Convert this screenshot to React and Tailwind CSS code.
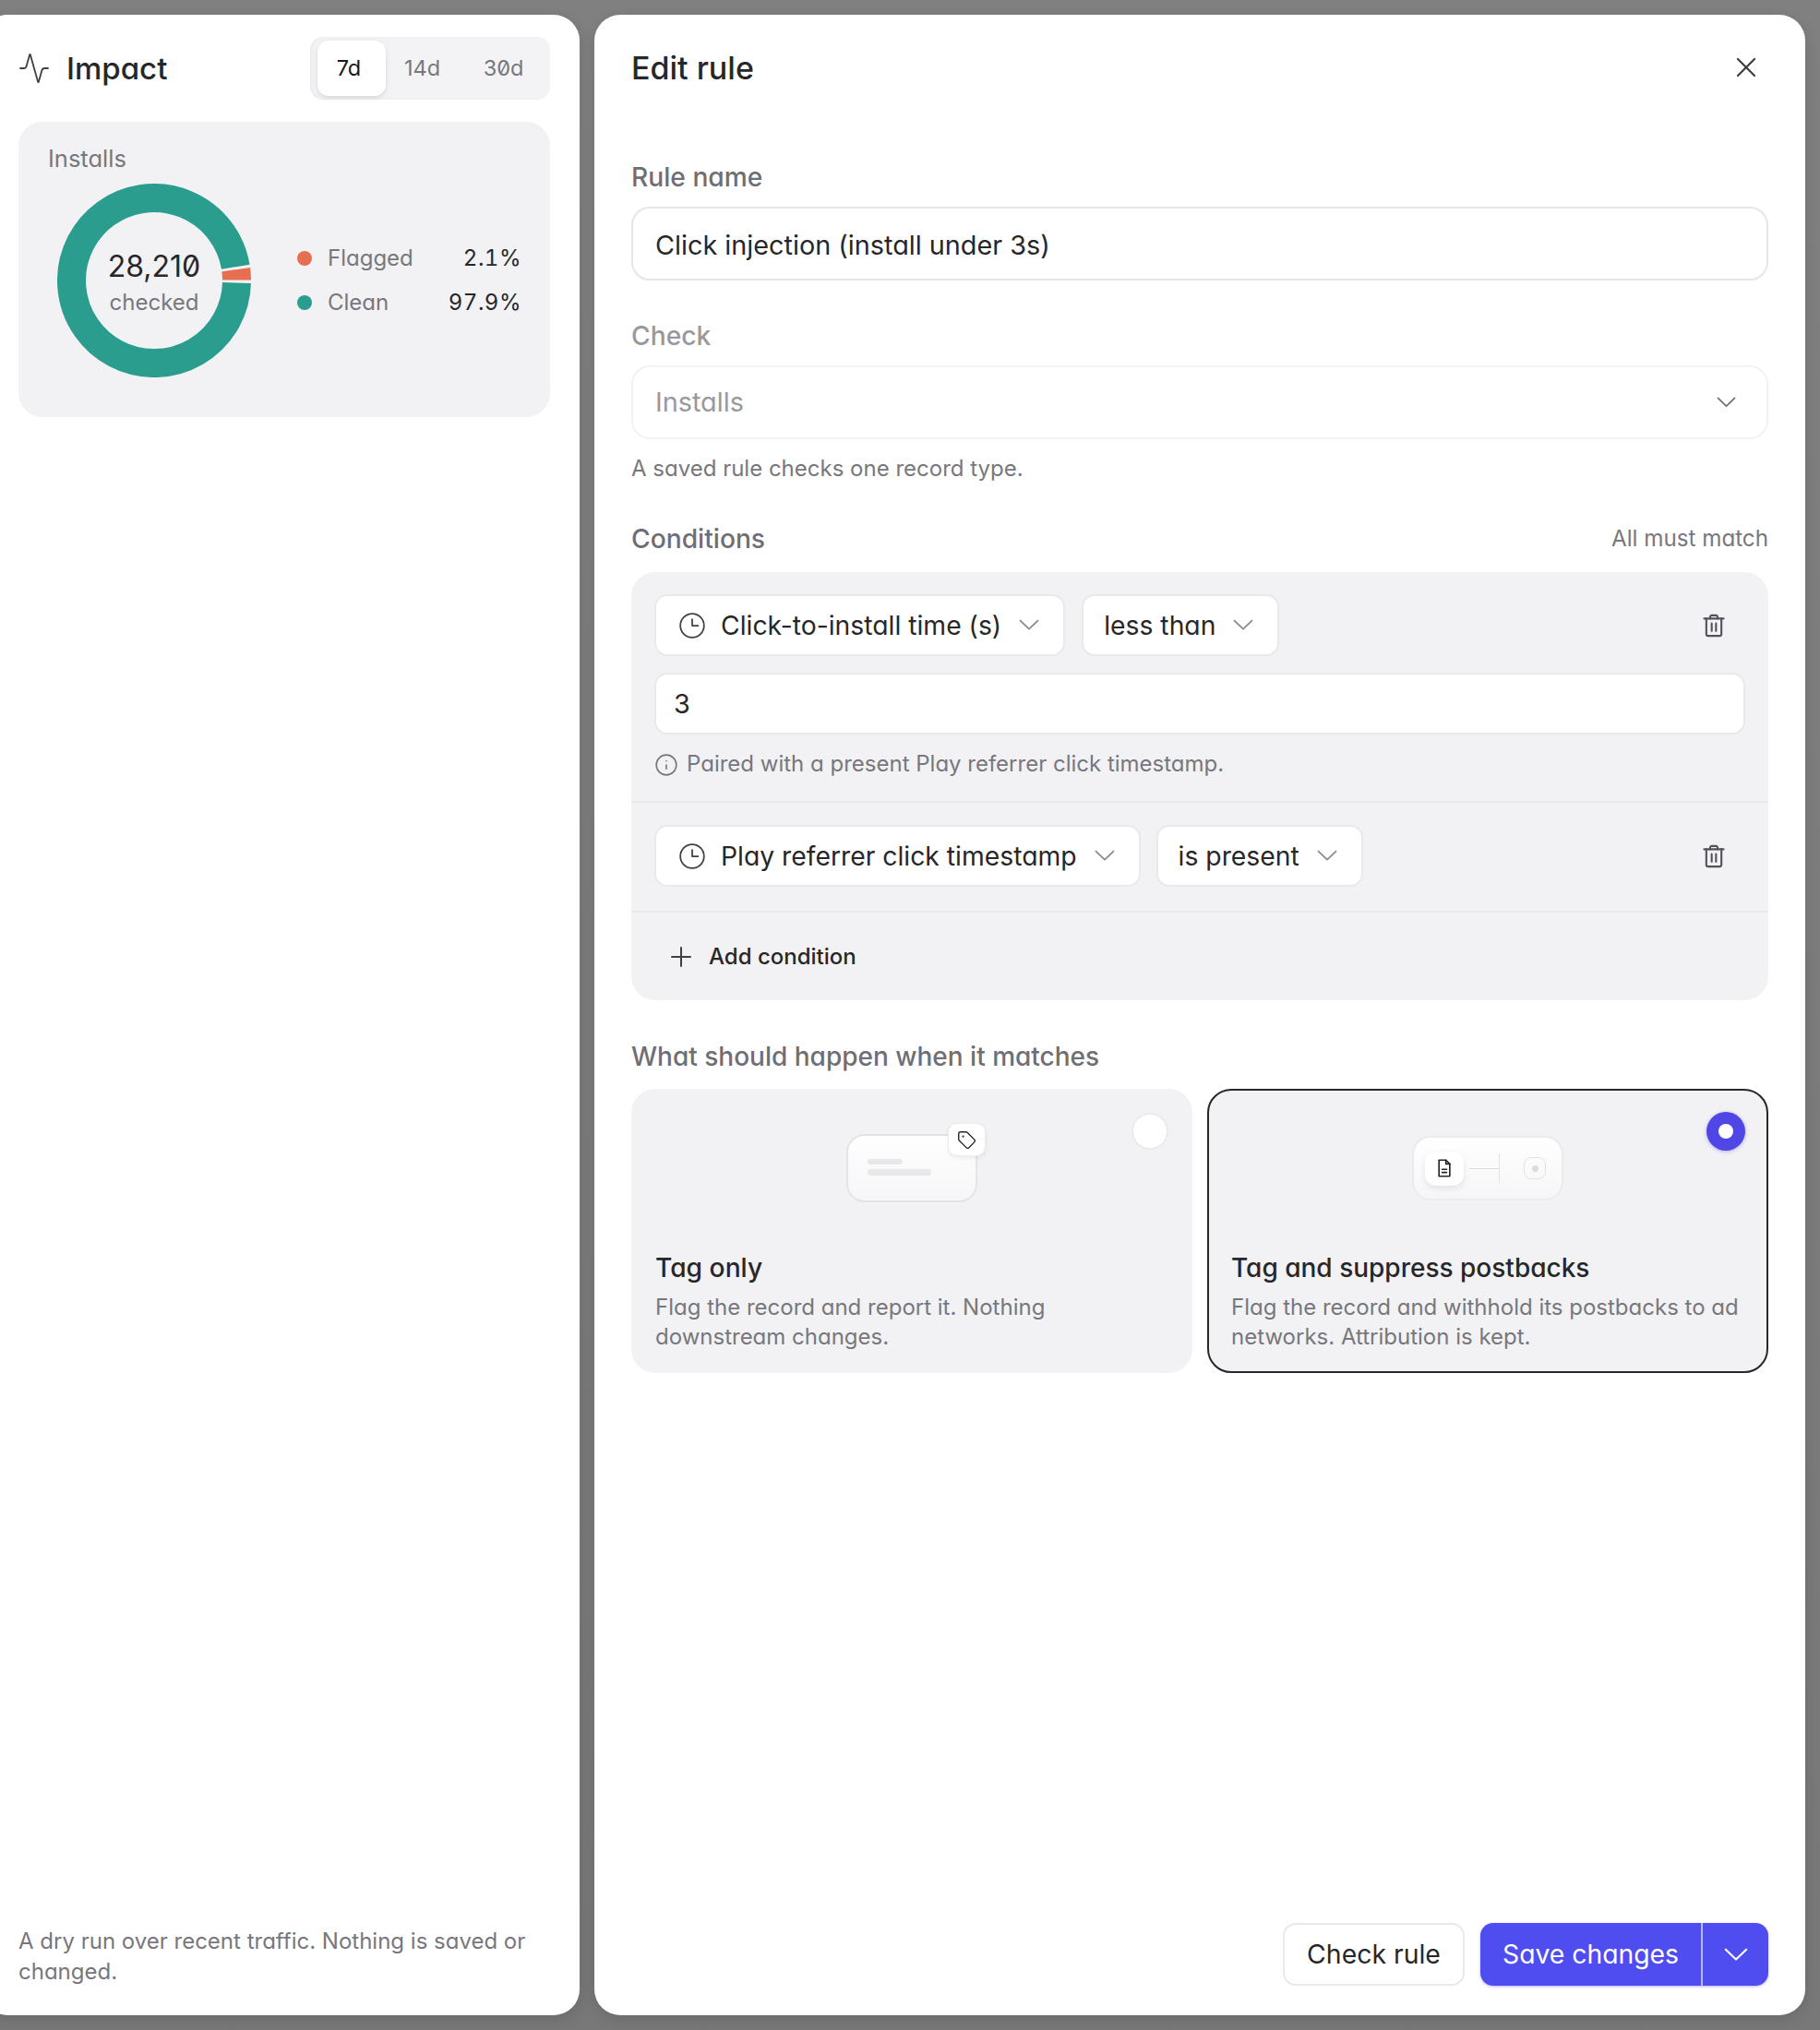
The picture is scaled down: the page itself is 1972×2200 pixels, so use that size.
import React from 'react';
import { Activity, X, Info, Tag } from 'lucide-react';

const polar = (a, r = 89.5) => {
  const t = (a * Math.PI) / 180;
  return `${(105 + r * Math.cos(t)).toFixed(2)} ${(105 + r * Math.sin(t)).toFixed(2)}`;
};
const arc = (from, to) => `M${polar(from)}A89.5 89.5 0 ${to - from > 180 ? 1 : 0} 1 ${polar(to)}`;

function Chevron({ w = 22, color = '#8a8a90' }) {
  return (
    <svg width={w} height={w * 0.55} viewBox="0 0 22 12" fill="none" stroke={color} strokeWidth="1.8" strokeLinecap="round" strokeLinejoin="round" className="shrink-0">
      <path d="M1.500 1.500 11 10.500l9.500-9" />
    </svg>
  );
}

function ClockIcon() {
  return (
    <svg width="28" height="28" viewBox="0 0 24 24" fill="none" stroke="#3f3f46" strokeWidth="1.5" strokeLinecap="round" strokeLinejoin="round" className="shrink-0">
      <circle cx="12" cy="12" r="11" />
      <path d="M12 6v6h5.500" />
    </svg>
  );
}

function TrashIcon() {
  return (
    <svg width="28" height="28" viewBox="0 0 24 24" fill="none" stroke="#52525b" strokeWidth="1.8" strokeLinecap="round" strokeLinejoin="round">
      <path d="M3 5.500h18" />
      <path d="M8.500 5.500V4a1.500 1.500 0 0 1 1.500-1.500h4A1.500 1.500 0 0 1 15.500 4v1.500" />
      <path d="M5 5.500V20a1.500 1.500 0 0 0 1.500 1.500h11A1.500 1.500 0 0 0 19 20V5.500" />
      <path d="M10 10v7M14 10v7" />
    </svg>
  );
}

function Pick({ children, clock }) {
  return (
    <div className={clock ? 'flex h-[67px] items-center rounded-[14px] border-2 border-[#e9e9ec] bg-white pl-[25px] pr-[26px] text-[28.300px] text-[#27272a]' : 'flex h-[67px] items-center rounded-[14px] border-2 border-[#e9e9ec] bg-white pl-[22px] pr-[26px] text-[28.300px] text-[#27272a]'}>
      {clock && <span className="mr-[17px] flex"><ClockIcon /></span>}
      <span className="pt-[1px]">{children}</span>
      <span className="ml-[19px] flex"><Chevron /></span>
    </div>
  );
}

function Segment({ children, active }) {
  return (
    <div className={active ? 'flex h-[60px] w-[74px] items-center justify-center rounded-[12px] bg-white pr-[6px] text-[#18181b] shadow-[0_2px_5px_rgba(0,0,0,0.12)]' : 'flex h-[60px] w-[88px] items-center justify-center pr-[9px] text-[#77777d]'}>
      {children}
    </div>
  );
}

export default function App() {
  return (
    <div className="flex h-[2200px] w-[1972px] overflow-hidden bg-gradient-to-b from-[#808080] to-[#787878] pt-[16px] pb-[16px] font-['Inter',sans-serif] [font-feature-settings:'cv11','zero']">
      <aside className="-ml-[20px] flex w-[648px] flex-col rounded-[28px] bg-white pl-[40px] pr-[32px] pt-[24px] pb-[31px] shadow-[0_4px_16px_rgba(0,0,0,0.12)]">
        <div className="flex h-[68px] items-center justify-between">
          <div className="flex items-center text-[#27272a]">
            <Activity size={36} strokeWidth={1.2} className="-ml-[1px] text-[#3f3f46]" />
            <span className="ml-[17px] pt-[2px] text-[33px] font-medium">Impact</span>
          </div>
          <div className="flex h-[68px] w-[260px] items-center rounded-[14px] bg-[#f3f3f5] pl-[8px] text-[23.500px] shadow-[inset_2px_0_3px_rgba(0,0,0,0.04)]">
            <Segment active>7d</Segment>
            <Segment>14d</Segment>
            <Segment>30d</Segment>
          </div>
        </div>

        <div className="mt-[24px] h-[320px] rounded-[26px] bg-[#f2f2f4] pl-[32px] pr-[31px] pt-[24px]">
          <div className="text-[25.500px] leading-[32px] text-[#77777d]">Installs</div>
          <div className="mt-[11px] ml-[10px] flex items-center">
            <div className="relative h-[210px] w-[210px] shrink-0">
              <svg width="210" height="210" viewBox="0 0 210 210" fill="none" strokeWidth="31">
                <path d={arc(1.6, 350.5)} stroke="#2a9d8f" />
                <path d={arc(352.4, 359.7)} stroke="#e76f51" />
              </svg>
              <div className="absolute inset-0 flex flex-col items-center justify-center pt-[6px]">
                <div className="text-[32px] leading-[40px] text-[#27272a]">28,210</div>
                <div className="mt-[2px] text-[24px] leading-[34px] text-[#77777d]">checked</div>
              </div>
            </div>
            <div className="ml-[50px] flex flex-1 flex-col gap-[16px] text-[24px] leading-[32px]">
              <div className="flex items-center">
                <span className="h-[16px] w-[16px] rounded-full bg-[#e76f51]" />
                <span className="ml-[17px] flex-1 text-[#77777d]">Flagged</span>
                <span className="tracking-[0.500px] tabular-nums text-[#27272a]">2.1%</span>
              </div>
              <div className="flex items-center">
                <span className="h-[16px] w-[16px] rounded-full bg-[#2a9d8f]" />
                <span className="ml-[17px] flex-1 text-[#77777d]">Clean</span>
                <span className="tracking-[0.500px] tabular-nums text-[#27272a]">97.9%</span>
              </div>
            </div>
          </div>
        </div>

        <p className="mt-auto text-[24px] leading-[32.500px] text-[#77777d]">A dry run over recent traffic. Nothing is saved or changed.</p>
      </aside>

      <main className="ml-[16px] flex w-[1312px] flex-col rounded-[28px] bg-white px-[40px] pt-[33px] pb-[32px] shadow-[0_4px_16px_rgba(0,0,0,0.12)]">
        <div className="flex h-[48px] items-center justify-between">
          <h1 className="text-[34px] font-medium text-[#27272a]">Edit rule</h1>
          <X size={36} strokeWidth={1.5} className="mr-[6px] text-[#3f3f46]" />
        </div>

        <label className="mt-[79px] text-[28.200px] font-medium leading-[32px] text-[#6e6e74]">Rule name</label>
        <div className="mt-[16px] flex h-[80px] items-center rounded-[20px] border-2 border-[#e6e6e9] px-[24px] pt-[3px] text-[28.800px] text-[#27272a]">Click injection (install under 3s)</div>

        <label className="mt-[44px] text-[28.200px] font-medium leading-[32px] text-[#98989d]">Check</label>
        <div className="mt-[16px] flex h-[80px] items-center justify-between rounded-[20px] border-2 border-[#f2f2f4] pl-[24px] pr-[33px] text-[28.800px] text-[#98989d]">
          Installs
          <Chevron w={21} color="#6e6e74" />
        </div>
        <p className="mt-[16px] text-[24px] leading-[32px] text-[#77777d]">A saved rule checks one record type.</p>

        <div className="mt-[44px] flex items-center justify-between leading-[32px]">
          <span className="text-[28.200px] font-medium text-[#6e6e74]">Conditions</span>
          <span className="text-[24.200px] text-[#77777d]">All must match</span>
        </div>

        <div className="mt-[20px] h-[464px] rounded-[26px] bg-[#f2f2f4]">
          <div className="h-[248px] px-[25px] pt-[24px]">
            <div className="flex items-center gap-[18px]">
              <Pick clock>Click-to-install time (s)</Pick>
              <Pick>less than</Pick>
              <span className="ml-auto mr-[20px] flex"><TrashIcon /></span>
            </div>
            <div className="mt-[18px] flex h-[67px] items-center rounded-[14px] border-2 border-[#e9e9ec] bg-white pl-[19px] pr-[20px] pt-[1px] text-[28.800px] text-[#27272a]">3</div>
            <div className="mt-[16px] flex items-center text-[24px] leading-[32px] text-[#77777d]">
              <Info size={26} strokeWidth={1.5} className="mr-[9px] mt-[2px]" />
              Paired with a present Play referrer click timestamp.
            </div>
          </div>
          <div className="h-[119px] border-t-2 border-[#e9e9ec] px-[25px] pt-[24px]">
            <div className="flex items-center gap-[17px]">
              <Pick clock>Play referrer click timestamp</Pick>
              <Pick>is present</Pick>
              <span className="ml-auto mr-[20px] flex"><TrashIcon /></span>
            </div>
          </div>
          <div className="flex h-[97px] items-center border-t-2 border-[#e9e9ec] pl-[43px] text-[24px] font-medium text-[#27272a]">
            <svg width="22" height="22" viewBox="0 0 22 22" fill="none" stroke="#3f3f46" strokeWidth="2" strokeLinecap="round" className="mr-[19px]">
              <path d="M11 1v20M1 11h20" />
            </svg>
            Add condition
          </div>
        </div>

        <label className="mt-[45px] text-[28px] font-medium leading-[32px] text-[#6e6e74]">What should happen when it matches</label>

        <div className="mt-[19px] grid grid-cols-2 gap-[16px]">
          <div className="relative h-[308px] rounded-[26px] border-2 border-transparent bg-[#f2f2f4] px-[24px]">
            <span className="absolute right-[24px] top-[24px] h-[40px] w-[40px] rounded-full border-2 border-[#ebebee] bg-white" />
            <div className="flex h-[174px] justify-center pt-[47px]">
              <div className="relative h-[74px] w-[142px] rounded-[20px] border-2 border-[#e4e4e7] bg-gradient-to-b from-white to-[#f6f6f8]">
                <div className="ml-[21px] mt-[25px] h-[6px] w-[38px] rounded-full bg-[#e8e8eb]" />
                <div className="ml-[21px] mt-[5px] h-[7px] w-[69px] rounded-full bg-[#e8e8eb]" />
                <div className="absolute -right-[11px] -top-[14px] flex h-[36px] w-[41px] items-center justify-center rounded-[10px] border border-[#ececef] bg-white shadow-[0_2px_5px_rgba(0,0,0,0.07)]">
                  <Tag size={21} strokeWidth={1.6} className="text-[#27272a]" />
                </div>
              </div>
            </div>
            <div className="text-[28.200px] font-medium leading-[36px] text-[#27272a]">Tag only</div>
            <p className="mt-[9px] text-[24px] leading-[32px] text-[#77777d]">Flag the record and report it. Nothing downstream changes.</p>
          </div>

          <div className="relative h-[308px] rounded-[26px] border-2 border-[#27272a] bg-[#f2f2f4] px-[24px]">
            <span className="absolute right-[23px] top-[23px] flex h-[42px] w-[42px] items-center justify-center rounded-full bg-[#4f46e5] shadow-[0_1px_4px_rgba(79,70,229,0.4)]">
              <span className="h-[16px] w-[16px] rounded-full bg-white" />
            </span>
            <div className="flex h-[174px] justify-center pt-[49px]">
              <div className="relative flex h-[70px] w-[164px] items-center rounded-[20px] border-2 border-[#ebebee] bg-gradient-to-b from-white to-[#f6f6f8] pl-[12px]">
                <div className="flex h-[37px] w-[42px] items-center justify-center rounded-[12px] bg-white shadow-[0_3px_7px_rgba(0,0,0,0.09)]">
                  <svg width="20" height="20" viewBox="0 0 24 24" fill="none" stroke="#27272a" strokeWidth="2" strokeLinejoin="round" strokeLinecap="round">
                    <path d="M5 1.500h9l5 5v16H5z" />
                    <path d="M14 1.500v5h5" />
                    <path d="M9 13.500h6M9 17.500h6" />
                  </svg>
                </div>
                <div className="ml-[6px] h-px w-[32px] bg-[#dededf]" />
                <div className="h-[32px] w-px bg-[#e2e2e4]" />
                <div className="ml-[26px] flex h-[24px] w-[24px] items-center justify-center rounded-[8px] border border-[#e2e2e5]">
                  <span className="h-[7px] w-[7px] rounded-full bg-[#dcdcdf]" />
                </div>
              </div>
            </div>
            <div className="text-[28px] font-medium leading-[36px] text-[#27272a]">Tag and suppress postbacks</div>
            <p className="mt-[9px] text-[24px] leading-[32px] text-[#77777d]">Flag the record and withhold its postbacks to ad networks. Attribution is kept.</p>
          </div>
        </div>

        <div className="mt-auto flex justify-end gap-[17px]">
          <button className="flex h-[68px] w-[197px] items-center justify-center rounded-[14px] border-2 border-[#e9e9ec] bg-white text-[28.400px] text-[#27272a]">Check rule</button>
          <div className="flex h-[68px] w-[312px] rounded-[14px] bg-[#4f4df0] text-white shadow-[0_1px_3px_rgba(79,70,229,0.4)]">
            <button className="flex w-[241px] items-center justify-center border-r-2 border-[#b8b7f8] text-[28.300px]">Save changes</button>
            <button className="flex flex-1 items-center justify-center">
              <Chevron w={26} color="#ffffff" />
            </button>
          </div>
        </div>
      </main>
    </div>
  );
}
